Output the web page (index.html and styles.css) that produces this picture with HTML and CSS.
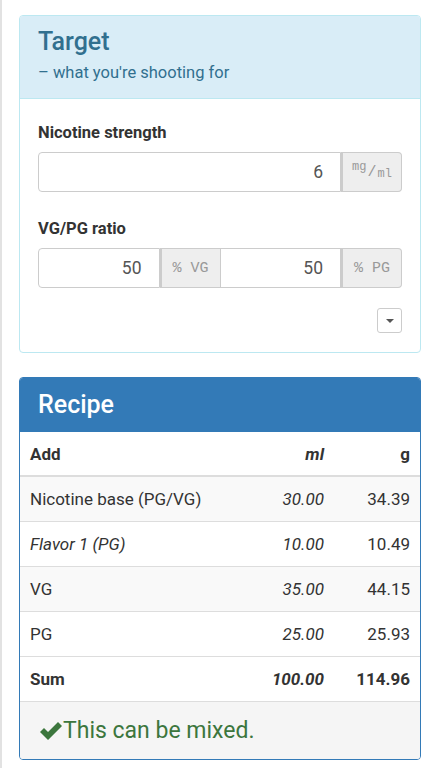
FILE: index.html
```html
<!DOCTYPE html>
<html lang="en">
<head>
    <meta charset="UTF-8">
    <meta name="viewport" content="width=device-width, initial-scale=1.0">
    <title>Mixer</title>
    <link rel="stylesheet" href="styles.css">
</head>
<body>
    <div class="page">
        <div class="panel panel-info">
            <div class="panel-heading">
                <h2>Target</h2>
                <p class="sub">&ndash; what you're shooting for</p>
            </div>
            <div class="panel-body">
                <label class="field-label">Nicotine strength</label>
                <div class="input-group">
                    <input class="form-control" type="text" value="6">
                    <span class="addon"><sup>mg</sup>/<sub>ml</sub></span>
                </div>

                <label class="field-label">VG/PG ratio</label>
                <div class="input-group">
                    <input class="form-control" type="text" value="50">
                    <span class="addon">%&nbsp;VG</span>
                    <input class="form-control" type="text" value="50">
                    <span class="addon">%&nbsp;PG</span>
                </div>

                <div class="more">
                    <button class="caret-btn"><span class="caret"></span></button>
                </div>
            </div>
        </div>

        <div class="panel panel-primary">
            <div class="panel-heading">
                <h2>Recipe</h2>
            </div>
            <table class="recipe">
                <thead>
                    <tr>
                        <th>Add</th>
                        <th class="num ml">ml</th>
                        <th class="num g">g</th>
                    </tr>
                </thead>
                <tbody>
                    <tr class="odd">
                        <td>Nicotine base (PG/VG)</td>
                        <td class="num ml">30.00</td>
                        <td class="num">34.39</td>
                    </tr>
                    <tr>
                        <td><em>Flavor 1 (PG)</em></td>
                        <td class="num ml">10.00</td>
                        <td class="num">10.49</td>
                    </tr>
                    <tr class="odd">
                        <td>VG</td>
                        <td class="num ml">35.00</td>
                        <td class="num">44.15</td>
                    </tr>
                    <tr>
                        <td>PG</td>
                        <td class="num ml">25.00</td>
                        <td class="num">25.93</td>
                    </tr>
                    <tr class="sum">
                        <td>Sum</td>
                        <td class="num ml">100.00</td>
                        <td class="num">114.96</td>
                    </tr>
                </tbody>
            </table>
            <div class="panel-footer">
                <svg class="check" width="24" height="20" viewBox="0 0 24 20">
                    <path d="M1 11 L5 7 L9 11 L19 1 L23 5 L9 19 Z" fill="#3c763d"/>
                </svg>
                <span class="ok">This can be mixed.</span>
            </div>
        </div>
    </div>
</body>
</html>
```

FILE: styles.css
```css
* {
    margin: 0;
    padding: 0;
    box-sizing: border-box;
}
body {
    font-family: Roboto, "Liberation Sans", sans-serif;
    background-color: #fff;
    color: #333;
}
.page {
    border-left: 2px solid #e2e2e2;
    min-height: 768px;
    padding: 15px 18px 0 17px;
}
.panel {
    border: 1px solid #ddd;
    border-radius: 4px;
    margin-bottom: 24px;
    overflow: hidden;
}
.panel-info {
    border-color: #bce8f1;
}
.panel-info .panel-heading {
    background-color: #d9edf7;
    color: #31708f;
    border-bottom: 1px solid #bce8f1;
    padding: 11px 18px 14px;
}
.panel-heading h2 {
    font-size: 25px;
    font-weight: 500;
    line-height: 30px;
}
.panel-heading .sub {
    font-size: 16.5px;
    line-height: 22px;
    margin-top: 5px;
}
.panel-body {
    padding: 23px 18px 19px;
}
.field-label {
    display: block;
    font-size: 16.5px;
    font-weight: bold;
    line-height: 22px;
    margin-bottom: 8px;
}
.input-group {
    display: flex;
    height: 40px;
    margin-bottom: 26px;
}
.form-control {
    flex: 1;
    min-width: 0;
    border: 1px solid #ccc;
    font-family: Roboto, "Liberation Sans", sans-serif;
    font-size: 17.5px;
    color: #555;
    text-align: right;
    padding: 0 17px;
    background: #fff;
}
.input-group .form-control:first-child {
    border-radius: 4px 0 0 4px;
}
.addon {
    width: 61px;
    flex: none;
    background-color: #eee;
    border: 1px solid #ccc;
    border-left: 2px solid #ccc;
    color: #999;
    font-family: "Liberation Mono", "DejaVu Sans Mono", monospace;
    font-size: 15px;
    display: flex;
    align-items: center;
    justify-content: center;
}
.addon:last-child {
    border-radius: 0 4px 4px 0;
}
.input-group .addon + .form-control {
    border-left: none;
}
.addon sup {
    font-size: 12px;
    position: relative;
    top: -5px;
    margin-right: 1px;
}
.addon sub {
    font-size: 12px;
    position: relative;
    top: 2px;
    margin-left: 1px;
}
.more {
    display: flex;
    justify-content: flex-end;
    margin-top: -6px;
}
.caret-btn {
    width: 25px;
    height: 25px;
    border: 1px solid #ccc;
    border-radius: 3px;
    background: #fff;
    display: flex;
    align-items: center;
    justify-content: center;
}
.caret {
    width: 0;
    height: 0;
    border-left: 4px solid transparent;
    border-right: 4px solid transparent;
    border-top: 4px solid #555;
}
.panel-primary {
    border-color: #337ab7;
}
.panel-primary .panel-heading {
    background-color: #337ab7;
    color: #fff;
    padding: 12px 18px 12px;
}
.recipe {
    width: 100%;
    border-collapse: collapse;
    font-size: 17px;
}
.recipe th,
.recipe td {
    padding: 10px;
    line-height: 24px;
    text-align: left;
    border-top: 1px solid #ddd;
}
.recipe thead th {
    border-top: none;
    border-bottom: 2px solid #ddd;
    padding-bottom: 9px;
}
.recipe .num {
    text-align: right;
}
.recipe .ml {
    font-style: italic;
    width: 110px;
}
.recipe .g {
    width: 86px;
}
.recipe tr.odd td {
    background-color: #f9f9f9;
}
.recipe tr.sum td {
    font-weight: bold;
}
.panel-footer {
    background-color: #f5f5f5;
    border-top: 1px solid #ddd;
    padding: 0 20px 0 19px;
    height: 58px;
    display: flex;
    align-items: center;
}
.check {
    flex: none;
    margin-top: 1px;
}
.ok {
    color: #3c763d;
    font-size: 23px;
    line-height: 30px;
}
```
